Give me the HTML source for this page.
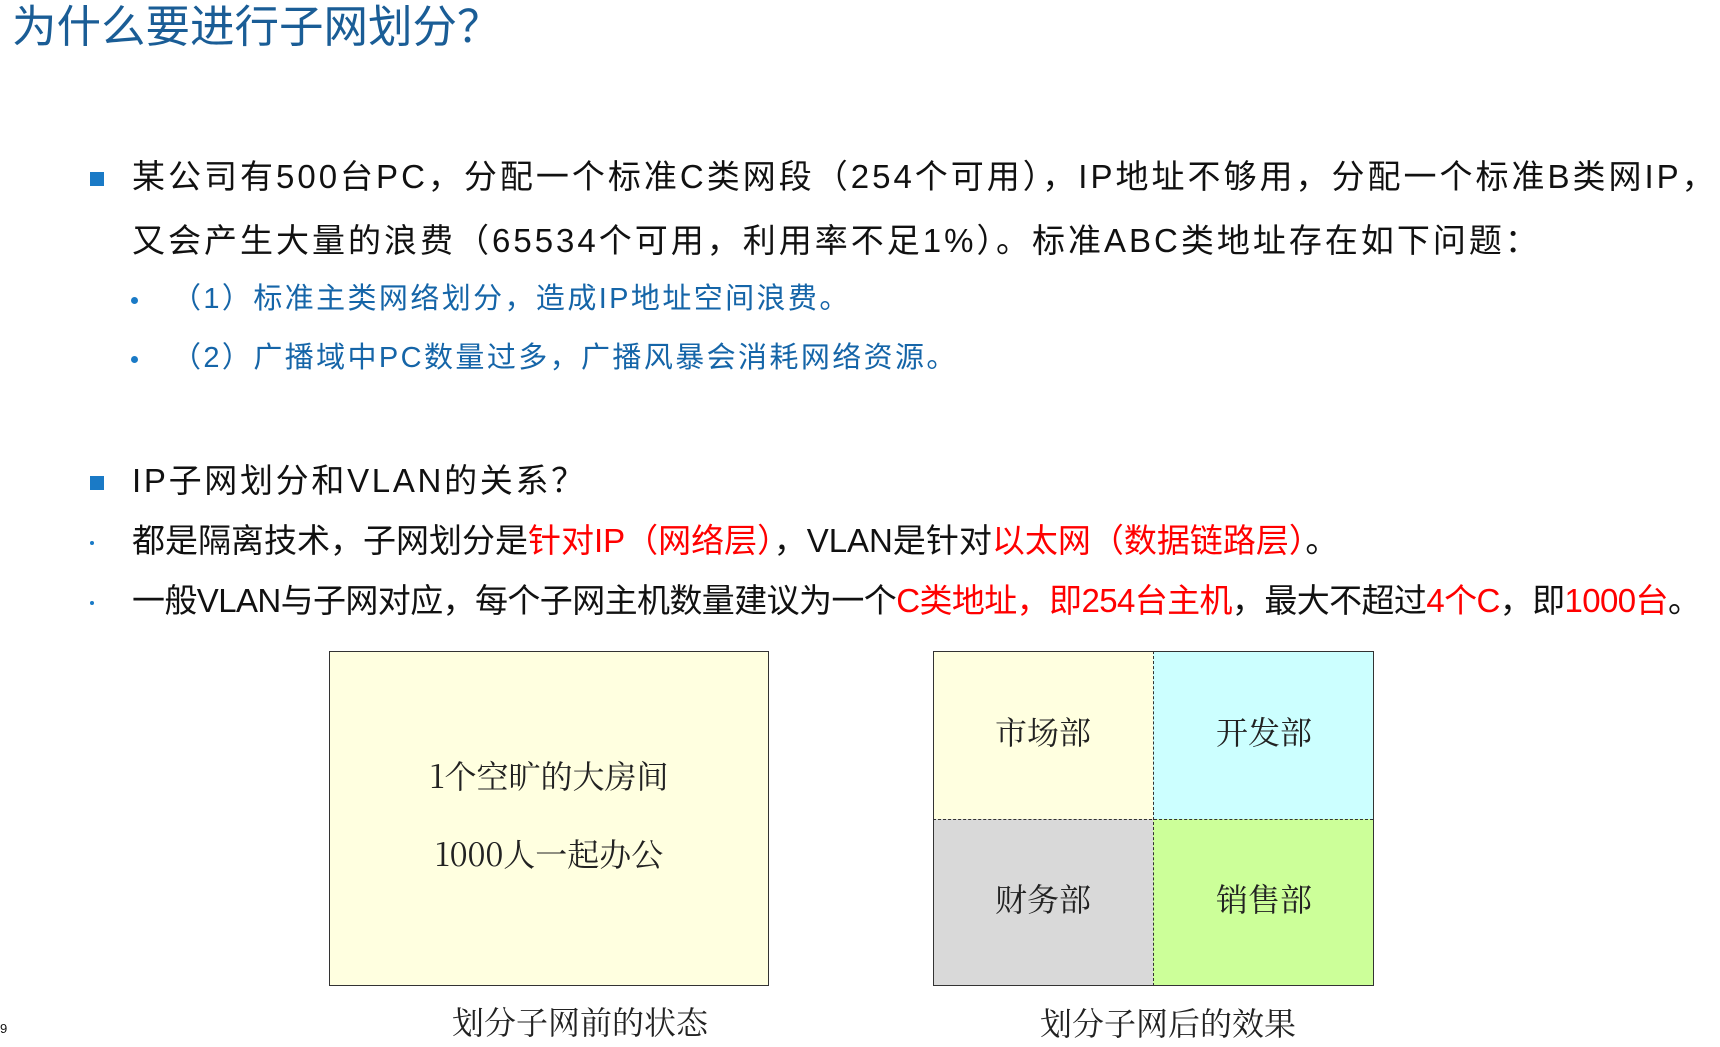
<!DOCTYPE html>
<html><head><meta charset="utf-8"><style>
body{margin:0;width:1720px;height:1047px;background:#fff;position:relative;overflow:hidden;font-family:"Liberation Sans","Noto Sans CJK SC",sans-serif;color:#111}
.a{position:absolute;white-space:nowrap;line-height:1}
.t{left:12px;top:6px;font-size:44.5px;color:#1a5d96}
.b{font-size:33px}
.s{font-size:29px;color:#1565a8;letter-spacing:2.4px}
.r{color:#ff0000}
.sq{position:absolute;width:14px;height:14px;background:#1a7ac6}
.dot{position:absolute;width:7px;height:7px;border-radius:50%;background:#1a7ac6}
.box{position:absolute;border:1.5px solid #333;box-sizing:border-box}
.serif{font-family:"Noto Serif CJK SC","Liberation Serif",serif;font-size:32px;color:#222}
.c{position:absolute;transform:translate(-50%,-50%);white-space:nowrap;line-height:1}
</style></head><body>
<div class="a t">为什么要进行子网划分？</div>

<div class="sq" style="left:90px;top:172px"></div>
<div class="a b" style="left:132px;top:160px;letter-spacing:3px">某公司有500台PC，分配一个标准C类网段（254个可用），IP地址不够用，分配一个标准B类网IP，</div>
<div class="a b" style="left:132px;top:224px;letter-spacing:3px">又会产生大量的浪费（65534个可用，利用率不足1%）。标准ABC类地址存在如下问题：</div>
<div class="dot" style="left:131px;top:297px"></div>
<div class="a s" style="left:172px;top:285px">（1）标准主类网络划分，造成IP地址空间浪费。</div>
<div class="dot" style="left:131px;top:356px"></div>
<div class="a s" style="left:172px;top:344px">（2）广播域中PC数量过多，广播风暴会消耗网络资源。</div>

<div class="sq" style="left:90px;top:476px"></div>
<div class="a b" style="left:132px;top:464px;letter-spacing:2.7px">IP子网划分和VLAN的关系？</div>
<div class="dot" style="left:90px;top:541px;width:4px;height:4px"></div>
<div class="a b" style="left:132px;top:524px">都是隔离技术，子网划分是<span class="r">针对IP（网络层）</span>，VLAN是针对<span class="r">以太网（数据链路层）</span>。</div>
<div class="dot" style="left:90px;top:601px;width:4px;height:4px"></div>
<div class="a b" style="left:132px;top:584px;letter-spacing:-0.6px">一般VLAN与子网对应，每个子网主机数量建议为一个<span class="r">C类地址，即254台主机</span>，最大不超过<span class="r">4个C</span>，即<span class="r">1000台</span>。</div>

<div class="box" style="left:329px;top:651px;width:440px;height:335px;background:#ffffe0"></div>
<div class="c serif" style="left:549px;top:775px">1个空旷的大房间</div>
<div class="c serif" style="left:549px;top:853px">1000人一起办公</div>

<div style="position:absolute;left:933px;top:651px;width:220px;height:168px;background:#ffffe0"></div>
<div style="position:absolute;left:1153px;top:651px;width:220px;height:168px;background:#ccffff"></div>
<div style="position:absolute;left:933px;top:819px;width:220px;height:167px;background:#d9d9d9"></div>
<div style="position:absolute;left:1153px;top:819px;width:220px;height:167px;background:#ccff99"></div>
<div style="position:absolute;left:1153px;top:651px;height:335px;border-left:1.5px dashed #333"></div>
<div style="position:absolute;left:933px;top:819px;width:440px;border-top:1.5px dashed #333"></div>
<div class="box" style="left:933px;top:651px;width:441px;height:335px"></div>
<div class="c serif" style="left:1043px;top:731px">市场部</div>
<div class="c serif" style="left:1264px;top:731px">开发部</div>
<div class="c serif" style="left:1043px;top:898px">财务部</div>
<div class="c serif" style="left:1264px;top:898px">销售部</div>

<div class="c serif" style="left:580px;top:1021px">划分子网前的状态</div>
<div class="c serif" style="left:1168px;top:1022px">划分子网后的效果</div>
<div class="a" style="left:0;top:1022px;font-size:13px">9</div>
</body></html>
